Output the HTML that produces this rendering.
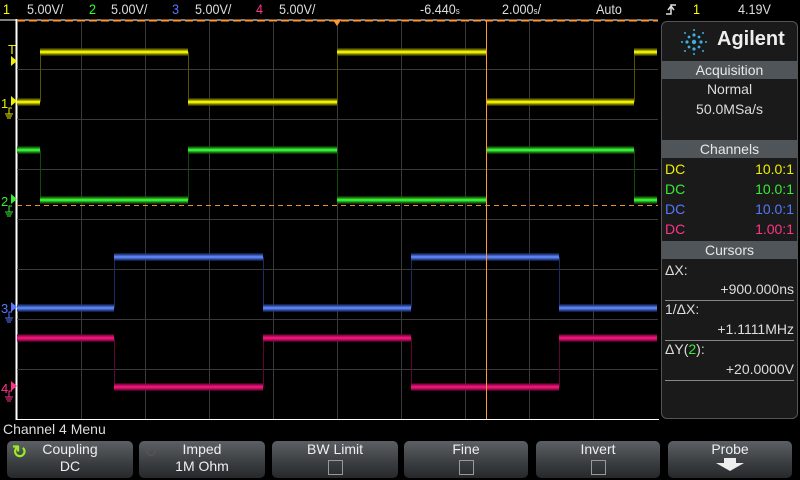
<!DOCTYPE html>
<html><head><style>
body{margin:0;width:800px;height:480px;background:#000;overflow:hidden;font-family:"Liberation Sans",sans-serif;color:#ddd;position:relative}
.t{position:absolute;font-size:14px;top:1px;white-space:nowrap;transform:scaleX(.9);transform-origin:left}
#panel{position:absolute;left:661px;top:21px;width:135px;height:396px;background:#1a1a1a;border:1px solid #555;border-radius:6px;overflow:hidden}
.bar{position:absolute;left:0;width:135px;height:18px;background:#50555a;color:#e8e8e8;font-size:14px;text-align:center;line-height:18px}
.r{position:absolute;font-size:14px;white-space:nowrap}
.btn{position:absolute;top:441px;height:37px;border-radius:5px;background:linear-gradient(#5c6064,#3a3d40 60%,#26282a);color:#eee;font-size:14px;text-align:center;line-height:17px}
.cb{display:inline-block;width:13px;height:13px;border:1px solid #999;margin-top:2px}
</style></head><body>
<div class="t" style="left:3px;color:#ff0">1</div><div class="t" style="left:27px">5.00V/</div>
<div class="t" style="left:89px;color:#3f3">2</div><div class="t" style="left:111px">5.00V/</div>
<div class="t" style="left:172px;color:#57f">3</div><div class="t" style="left:195px">5.00V/</div>
<div class="t" style="left:256px;color:#f38">4</div><div class="t" style="left:279px">5.00V/</div>
<div class="t" style="left:420px">-6.440<span style="font-size:9px">s</span></div>
<div class="t" style="left:502px">2.000<span style="font-size:9px">s</span>/</div>
<div class="t" style="left:596px">Auto</div>
<svg width="14" height="16" style="position:absolute;left:664px;top:2px"><path d="M2,12H7V3H12M4,8L7,4L10,8" stroke="#ddd" stroke-width="1.5" fill="none"/></svg>
<div class="t" style="left:693px;color:#ff0">1</div>
<div class="t" style="left:738px">4.19V</div>
<svg width="800" height="430" style="position:absolute;left:0;top:0">
<line x1="16.5" y1="19" x2="16.5" y2="420" stroke="#fff" stroke-width="2"/>
<line x1="0" y1="20" x2="658" y2="20" stroke="#fff" stroke-width="1"/>
<line x1="17" y1="20.5" x2="658" y2="20.5" stroke="#f93" stroke-width="2" stroke-dasharray="8,4"/>
<line x1="16" y1="419.5" x2="659" y2="419.5" stroke="#fff"/>
<g stroke="#3a3a3a" stroke-width="1">
<line x1="81.5" y1="21" x2="81.5" y2="419"/><line x1="145.5" y1="21" x2="145.5" y2="419"/><line x1="209.5" y1="21" x2="209.5" y2="419"/><line x1="273.5" y1="21" x2="273.5" y2="419"/><line x1="337.5" y1="21" x2="337.5" y2="419"/><line x1="401.5" y1="21" x2="401.5" y2="419"/><line x1="465.5" y1="21" x2="465.5" y2="419"/><line x1="529.5" y1="21" x2="529.5" y2="419"/><line x1="593.5" y1="21" x2="593.5" y2="419"/>
<line x1="17" y1="69.5" x2="658" y2="69.5"/><line x1="17" y1="119.5" x2="658" y2="119.5"/><line x1="17" y1="169.5" x2="658" y2="169.5"/><line x1="17" y1="219.5" x2="658" y2="219.5"/><line x1="17" y1="269.5" x2="658" y2="269.5"/><line x1="17" y1="319.5" x2="658" y2="319.5"/><line x1="17" y1="369.5" x2="658" y2="369.5"/>
</g>
<line x1="17" y1="205.5" x2="658" y2="205.5" stroke="#e8902a" stroke-dasharray="5,4"/>
<polygon points="333,20 341,20 337,26" fill="#f93"/>
<g fill="none" stroke-width="1">
<path d="M40.5,52V102M188.5,52V102M337.5,52V102M486.5,52V102M634.5,52V102" stroke="#555500"/>
<path d="M40.5,150V200M188.5,150V200M337.5,150V200M486.5,150V200M634.5,150V200" stroke="#104a0a"/>
<path d="M114.5,257V308M263.5,257V308M411.5,257V308M559.5,257V308" stroke="#1c2c60"/>
<path d="M114.5,338V387M263.5,338V387M411.5,338V387M559.5,338V387" stroke="#5a0830"/>
</g>
<g fill="none">
<path d="M17,102H40M40,52H188M188,102H337M337,52H486M486,102H634M634,52H657" stroke="#6a6a00" stroke-width="7"/>
<path d="M17,102H40M40,52H188M188,102H337M337,52H486M486,102H634M634,52H657" stroke="#ee0" stroke-width="3"/>
<path d="M17,150H40M40,200H188M188,150H337M337,200H486M486,150H634M634,200H657" stroke="#1a6a10" stroke-width="7"/>
<path d="M17,150H40M40,200H188M188,150H337M337,200H486M486,150H634M634,200H657" stroke="#3e3" stroke-width="3"/>
<path d="M17,308H114M114,257H263M263,308H411M411,257H559M559,308H657" stroke="#27408a" stroke-width="7"/>
<path d="M17,308H114M114,257H263M263,308H411M411,257H559M559,308H657" stroke="#5a80f0" stroke-width="3"/>
<path d="M17,338H114M114,387H263M263,338H411M411,387H559M559,338H657" stroke="#8a0a45" stroke-width="7"/>
<path d="M17,338H114M114,387H263M263,338H411M411,387H559M559,338H657" stroke="#f0107a" stroke-width="3"/>
</g>
<line x1="486.5" y1="21" x2="486.5" y2="419" stroke="#f93"/>
<g font-size="13" font-family="Liberation Sans">
<text x="8" y="54" fill="#ee0">T</text><polygon points="11,56 11,66 17,61" fill="#ee0"/>
<text x="1" y="108" fill="#ee0">1</text><polygon points="11,96 11,106 17,101" fill="#ee0"/>
<text x="1" y="206" fill="#3e3">2</text><polygon points="11,194 11,204 17,199" fill="#3e3"/>
<text x="1" y="313" fill="#57f">3</text><polygon points="11,302 11,312 17,307" fill="#57f"/>
<text x="1" y="393" fill="#f38">4</text><polygon points="11,381 11,391 17,386" fill="#f38"/>
</g>
<g stroke-width="1" fill="none">
<path d="M5,114H13M6,116H12M7,118H11M9,114V108H12" stroke="#ee0"/>
<path d="M5,212H13M6,214H12M7,216H11M9,212V206H12" stroke="#3e3"/>
<path d="M5,318H13M6,320H12M7,322H11M9,318V312H12" stroke="#57f"/>
<path d="M5,397H13M6,399H12M7,401H11M9,397V391H12" stroke="#f38"/>
</g>
</svg>
<div id="panel">
<svg width="40" height="40" style="position:absolute;left:12px;top:0px" viewBox="0 0 40 40"><g fill="#3ab0e0"><circle cx="20" cy="20" r="2.2"/><circle cx="20" cy="13" r="1.6"/><circle cx="20" cy="27" r="1.6"/><circle cx="13" cy="20" r="1.6"/><circle cx="27" cy="20" r="1.6"/><circle cx="15" cy="15" r="1.4"/><circle cx="25" cy="15" r="1.4"/><circle cx="15" cy="25" r="1.4"/><circle cx="25" cy="25" r="1.4"/><circle cx="20" cy="8" r="1"/><circle cx="20" cy="32" r="1"/><circle cx="8" cy="20" r="1"/><circle cx="32" cy="20" r="1"/><circle cx="11" cy="11" r="1"/><circle cx="29" cy="11" r="1"/><circle cx="11" cy="29" r="1"/><circle cx="29" cy="29" r="1"/></g></svg>
<div class="r" style="left:55px;top:6px;font-size:20px;font-weight:bold;color:#eee">Agilent</div>
<div class="bar" style="top:39px">Acquisition</div>
<div class="r" style="left:0;width:135px;text-align:center;top:59px;color:#ddd">Normal</div>
<div class="r" style="left:0;width:135px;text-align:center;top:79px;color:#ddd">50.0MSa/s</div>
<div class="bar" style="top:118px">Channels</div>
<div class="r" style="left:3px;top:139px;color:#ee0">DC</div><div class="r" style="right:3px;top:139px;color:#ee0">10.0:1</div>
<div class="r" style="left:3px;top:159px;color:#3e3">DC</div><div class="r" style="right:3px;top:159px;color:#3e3">10.0:1</div>
<div class="r" style="left:3px;top:179px;color:#57f">DC</div><div class="r" style="right:3px;top:179px;color:#57f">10.0:1</div>
<div class="r" style="left:3px;top:199px;color:#f38">DC</div><div class="r" style="right:3px;top:199px;color:#f38">1.00:1</div>
<div class="bar" style="top:219px">Cursors</div>
<div class="r" style="left:3px;top:240px">ΔX:</div>
<div class="r" style="right:3px;top:259px">+900.000ns</div>
<div style="position:absolute;left:3px;right:3px;top:278px;border-top:1px solid #888"></div>
<div class="r" style="left:3px;top:279px">1/ΔX:</div>
<div class="r" style="right:3px;top:299px">+1.1111MHz</div>
<div style="position:absolute;left:3px;right:3px;top:318px;border-top:1px solid #888"></div>
<div class="r" style="left:3px;top:319px">ΔY(<span style="color:#3e3">2</span>):</div>
<div class="r" style="right:3px;top:339px">+20.0000V</div>
<div style="position:absolute;left:3px;right:3px;top:358px;border-top:1px solid #888"></div>
</div>
<div class="r" style="left:3px;top:421px;color:#ddd">Channel 4 Menu</div>
<div class="btn" style="left:7px;width:126px"><span style="position:absolute;left:5px;top:3px;color:#9e2;font-size:18px;font-weight:bold">↻</span>Coupling<br>DC</div>
<div class="btn" style="left:139px;width:126px"><span style="position:absolute;left:5px;top:3px;color:#555;font-size:16px">↻</span>Imped<br>1M Ohm</div>
<div class="btn" style="left:272px;width:126px">BW Limit<br><span class="cb"></span></div>
<div class="btn" style="left:404px;width:124px">Fine<br><span class="cb"></span></div>
<div class="btn" style="left:536px;width:124px">Invert<br><span class="cb"></span></div>
<div class="btn" style="left:668px;width:124px">Probe<br><svg width="30" height="14" viewBox="0 0 30 14"><polygon points="9,0 21,0 21,5 29,5 15,13 1,5 9,5" fill="#eee"/></svg></div>
</body></html>
